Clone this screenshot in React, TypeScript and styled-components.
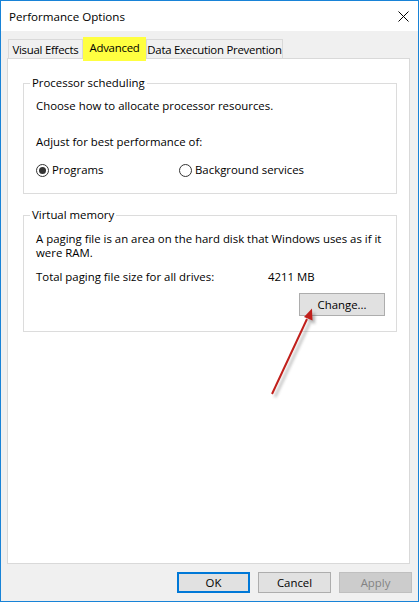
import React from "react";
import styled, { createGlobalStyle } from "styled-components";

const GlobalStyle = createGlobalStyle`
  html, body { margin: 0; padding: 0; background: #ffffff; }
  body {
    font-family: "Open Sans", "Noto Sans", Arial, sans-serif;
    font-size: 11.4px;
    color: #000000;
  }
  * { box-sizing: border-box; }
`;

const Window = styled.div`
  position: relative;
  width: 419px;
  height: 602px;
  border: 1px solid #1883d7;
  background: #f0f0f0;
  display: flex;
  flex-direction: column;
`;

const TitleBar = styled.div`
  height: 30px;
  background: #ffffff;
  display: flex;
  align-items: center;
  justify-content: space-between;
  padding: 0 9px 0 8px;
  font-size: 11.6px;
`;

const Body = styled.div`
  flex: 1;
  display: flex;
  flex-direction: column;
  padding: 6px 6px 0 6px;
`;

const TabStrip = styled.div`
  height: 21px;
  display: flex;
  align-items: flex-end;
  padding-left: 1px;
  position: relative;
  z-index: 2;
`;

const Tab = styled.div<{ $active?: boolean; $w: number }>`
  width: ${(p) => p.$w}px;
  display: flex;
  align-items: center;
  justify-content: center;
  white-space: nowrap;
  letter-spacing: -0.25px;
  ${(p) =>
    p.$active
      ? `
    height: 24px;
    margin-bottom: -3px;
    background: #ffff40;
    padding-bottom: 3px;
  `
      : `
    height: 19px;
    background: #f0f0f0;
    border: 1px solid #d9d9d9;
    border-bottom: none;
    padding-top: 1px;
  `}
`;

const Panel = styled.div`
  flex: 1;
  margin-right: 2px;
  background: #ffffff;
  border: 1px solid #d9d9d9;
  padding: 16px 12px 0 15px;
  display: flex;
  flex-direction: column;
`;

const Group = styled.fieldset<{ $gap?: number }>`
  margin: ${(p) => p.$gap ?? 0}px 0 0 0;
  padding: 0 11px 15px 12px;
  border: 1px solid #dcdcdc;
  min-width: 0;
`;

const Legend = styled.legend`
  padding: 0 2px;
  margin-left: -6px;
  line-height: 16px;
`;

const Line = styled.div<{ $top: number }>`
  margin-top: ${(p) => p.$top}px;
  line-height: 16px;
  white-space: nowrap;
`;

const Para = styled.div`
  margin-top: 9px;
  line-height: 14px;
  white-space: nowrap;
`;

const RadioRow = styled.div`
  margin-top: 12px;
  display: grid;
  grid-template-columns: 143px auto;
  line-height: 16px;
`;

const RadioLabel = styled.label`
  display: flex;
  align-items: center;
  gap: 3px;
`;

const RadioCircle = styled.span<{ $checked?: boolean }>`
  width: 13px;
  height: 13px;
  border-radius: 50%;
  border: 1px solid #333333;
  background: #ffffff;
  display: flex;
  align-items: center;
  justify-content: center;
  &::after {
    content: "";
    width: 7px;
    height: 7px;
    border-radius: 50%;
    background: ${(p) => (p.$checked ? "#333333" : "transparent")};
  }
`;

const InfoRow = styled.div`
  margin-top: 9px;
  display: grid;
  grid-template-columns: 232px auto;
  line-height: 16px;
  white-space: nowrap;
`;

const ButtonRow = styled.div`
  margin-top: 8px;
  display: flex;
  justify-content: flex-end;
`;

const Button = styled.button<{ $primary?: boolean; $disabled?: boolean; $w?: number }>`
  width: ${(p) => p.$w ?? 73}px;
  height: ${(p) => (p.$w ? 23 : 21)}px;
  padding: 0;
  font-family: inherit;
  font-size: 11.4px;
  color: ${(p) => (p.$disabled ? "#838383" : "#000000")};
  background: ${(p) => (p.$disabled ? "#cccccc" : "#e1e1e1")};
  border: ${(p) =>
    p.$primary ? "2px solid #0078d7" : p.$disabled ? "1px solid #bfbfbf" : "1px solid #adadad"};
  display: flex;
  align-items: center;
  justify-content: center;
`;

const Footer = styled.div`
  height: 37px;
  display: flex;
  justify-content: flex-end;
  gap: 8px;
  padding: 8px 0 0 0;
`;

const ArrowOverlay = styled.svg`
  position: absolute;
  left: 0;
  top: 0;
  pointer-events: none;
  z-index: 5;
`;

function CloseIcon() {
  return (
    <svg width="11" height="11" viewBox="0 0 11 11">
      <path d="M0.5 0.5 L10.5 10.5 M10.5 0.5 L0.5 10.5" stroke="#000" strokeWidth="1" fill="none" />
    </svg>
  );
}

export default function App() {
  return (
    <>
      <GlobalStyle />
      <Window>
        <TitleBar>
          <span>Performance Options</span>
          <CloseIcon />
        </TitleBar>
        <Body>
          <TabStrip>
            <Tab $w={75}>Visual Effects</Tab>
            <Tab $w={63} $active>
              Advanced
            </Tab>
            <Tab $w={137}>Data Execution Prevention</Tab>
          </TabStrip>
          <Panel>
            <Group>
              <Legend>Processor scheduling</Legend>
              <Line $top={7}>Choose how to allocate processor resources.</Line>
              <Line $top={20}>Adjust for best performance of:</Line>
              <RadioRow>
                <RadioLabel>
                  <RadioCircle $checked />
                  Programs
                </RadioLabel>
                <RadioLabel>
                  <RadioCircle />
                  Background services
                </RadioLabel>
              </RadioRow>
            </Group>
            <Group $gap={13}>
              <Legend>Virtual memory</Legend>
              <Para>
                A paging file is an area on the hard disk that Windows uses as if it
                <br />
                were RAM.
              </Para>
              <InfoRow>
                <span>Total paging file size for all drives:</span>
                <span>4211 MB</span>
              </InfoRow>
              <ButtonRow>
                <Button $w={86}>Change...</Button>
              </ButtonRow>
            </Group>
          </Panel>
          <Footer>
            <Button $primary>OK</Button>
            <Button>Cancel</Button>
            <Button $disabled>Apply</Button>
          </Footer>
        </Body>
        <ArrowOverlay width="419" height="602" viewBox="0 0 419 602">
          <defs>
            <filter id="sh" x="-50%" y="-50%" width="200%" height="200%">
              <feGaussianBlur stdDeviation="1.6" />
            </filter>
          </defs>
          <g transform="translate(3 3)" opacity="0.45" filter="url(#sh)">
            <line x1="271" y1="393" x2="306" y2="318" stroke="#555" strokeWidth="2" />
            <polygon points="311,308 303,316 311,320" fill="#555" />
          </g>
          <line x1="271" y1="393" x2="306" y2="318" stroke="#c1201c" strokeWidth="2" />
          <polygon points="311,307.5 303,316 311.5,319.5" fill="#c1201c" />
        </ArrowOverlay>
      </Window>
    </>
  );
}
